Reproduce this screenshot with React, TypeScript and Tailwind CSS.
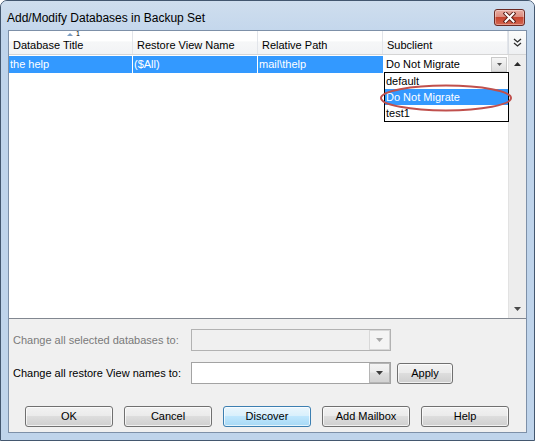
import React from "react";

const font = "font-['Liberation_Sans',Arial,sans-serif]";

function DownArrow({ color = "#3c3c3c", w = 7, h = 4 }: { color?: string; w?: number; h?: number }) {
  return (
    <svg width={w} height={h} viewBox={`0 0 ${w} ${h}`}>
      <polygon points={`0,0 ${w},0 ${w / 2},${h}`} fill={color} />
    </svg>
  );
}

function UpArrow({ color = "#2a2a2a", w = 7, h = 4 }: { color?: string; w?: number; h?: number }) {
  return (
    <svg width={w} height={h} viewBox={`0 0 ${w} ${h}`}>
      <polygon points={`${w / 2},0 ${w},${h} 0,${h}`} fill={color} />
    </svg>
  );
}

function HeaderCell({ label, width, children }: { label: string; width: string; children?: React.ReactNode }) {
  return (
    <div className={`relative ${width} h-full border-r border-[#e2e5ea] pl-[4px] pt-[8px] text-[11px] leading-[13px] text-black`}>
      {children}
      {label}
    </div>
  );
}

function Button({ label, primary = false, width = "w-[88px]" }: { label: string; primary?: boolean; width?: string }) {
  const skin = primary
    ? "border-[#3c7fb1] bg-[linear-gradient(to_bottom,#eaf6fd_0%,#d9f0fc_45%,#bee6fd_50%,#a7d9f5_100%)]"
    : "border-[#707070] bg-[linear-gradient(to_bottom,#f2f2f2_0%,#ebebeb_45%,#dddddd_50%,#cfcfcf_100%)]";
  return (
    <div
      className={`${width} h-[21px] rounded-[3px] border ${skin} shadow-[inset_0_0_0_1px_rgba(255,255,255,0.7)] flex items-center justify-center text-[11px] text-black`}
    >
      {label}
    </div>
  );
}

function Combo({ disabled = false }: { disabled?: boolean }) {
  return (
    <div
      className={`w-[200px] h-[22px] border flex ${
        disabled ? "border-[#b2b2b2] bg-[#f0f0f0]" : "border-[#a3a3a3] bg-white"
      }`}
    >
      <div className="flex-1" />
      <div
        className={`w-[21px] h-full border flex items-center justify-center ${
          disabled
            ? "border-[#d8d8d8] bg-[#f4f4f4]"
            : "border-[#b5b5b5] bg-[linear-gradient(to_bottom,#f4f4f4_0%,#ececec_45%,#dedede_50%,#d2d2d2_100%)]"
        }`}
      >
        <DownArrow color={disabled ? "#a8a8a8" : "#3c3c3c"} />
      </div>
    </div>
  );
}

export default function App() {
  return (
    <div className={`w-[535px] h-[441px] ${font} bg-white`}>
      <div className="relative w-full h-full flex flex-col border border-[#43576f] rounded-t-[7px] bg-[#bfd4eb]">
        {/* title bar */}
        <div className="relative h-[29px] shrink-0 rounded-t-[6px] bg-[linear-gradient(to_bottom,#cfdeee_0%,#c4d7ec_100%)]">
          <span className="absolute left-[6px] top-[10px] text-[12px] leading-[14px] text-black whitespace-nowrap">
            Add/Modify Databases in Backup Set
          </span>
          <div className="absolute right-[9px] top-[8px] w-[31px] h-[17px] rounded-[3px] border border-[#6b2a24] bg-[linear-gradient(to_bottom,#e9ada2_0%,#dc8d80_45%,#c6442f_50%,#d46752_100%)] shadow-[inset_0_0_0_1px_rgba(255,255,255,0.35)] flex items-center justify-center">
            <svg width="13" height="11" viewBox="0 0 13 11">
              <path d="M2.5 1.5 L10.5 9.5 M10.5 1.5 L2.5 9.5" stroke="#5b1f19" strokeWidth="4" strokeLinecap="square" />
              <path d="M2.5 1.5 L10.5 9.5 M10.5 1.5 L2.5 9.5" stroke="#ffffff" strokeWidth="2" strokeLinecap="square" />
            </svg>
          </div>
        </div>

        {/* client area */}
        <div className="mx-[7px] mb-[7px] flex-1 flex flex-col bg-[#f0f0f0] border border-[#7d90a8]">
          {/* list view */}
          <div className="relative h-[288px] shrink-0 bg-white border-b border-[#828790] flex flex-col">
            <div className="h-[24px] shrink-0 flex border-b border-[#d5d5d5] bg-[linear-gradient(to_bottom,#ffffff_0%,#ffffff_45%,#f6f7f8_46%,#f2f3f5_100%)]">
              <HeaderCell label="Database Title" width="w-[124px]">
                <div className="absolute left-[58px] top-[0px] h-[7px] flex items-start gap-[3px]">
                  <div className="mt-[2px]">
                    <UpArrow color="#7b9cc2" w={6} h={3} />
                  </div>
                  <span className="text-[7px] leading-[6px] text-black">1</span>
                </div>
              </HeaderCell>
              <HeaderCell label="Restore View Name" width="w-[125px]" />
              <HeaderCell label="Relative Path" width="w-[125px]" />
              <HeaderCell label="Subclient" width="w-[125px]" />
              <div className="flex-1 h-full border-l border-[#d9dde3] bg-[linear-gradient(to_bottom,#fbfbfb_0%,#eef0f2_100%)] flex items-center justify-center">
                <svg width="9" height="9" viewBox="0 0 9 9">
                  <path d="M1 1 L4.5 4 L8 1 M1 5 L4.5 8 L8 5" stroke="#2e2e2e" strokeWidth="1.3" fill="none" />
                </svg>
              </div>
            </div>

            <div className="flex-1 flex">
              <div className="flex-1 pt-[1px]">
                <div className="h-[17px] flex text-[11px] leading-[13px]">
                  <div className="w-[124px] h-full bg-[#3399ff] border-r border-white text-white pl-[1px] flex items-center">the help</div>
                  <div className="w-[125px] h-full bg-[#3399ff] border-r border-white text-white pl-[1px] flex items-center">($All)</div>
                  <div className="w-[125px] h-full bg-[#3399ff] text-white pl-[1px] flex items-center">mail\thelp</div>
                  <div className="w-[124px] ml-[1px] h-full bg-white flex items-center">
                    <span className="pl-[2px] flex-1 text-black">Do Not Migrate</span>
                    <div className="w-[16px] h-[15px] mr-[1px] border border-[#c9c9c9] bg-[linear-gradient(to_bottom,#f6f6f6_0%,#dedede_100%)] flex items-center justify-center">
                      <DownArrow color="#555555" w={5} h={3} />
                    </div>
                  </div>
                </div>
              </div>
              <div className="w-[18px] h-full bg-[#ededed] border-l border-[#e2e2e2] flex flex-col items-center justify-between pt-[7px] pb-[7px]">
                <UpArrow color="#2a2a2a" />
                <DownArrow color="#4a4a4a" />
              </div>
            </div>

            {/* open drop-down list */}
            <div className="absolute left-[375px] top-[41px] w-[125px] h-[50px] border border-black bg-white text-[11px] leading-[13px] flex flex-col">
              <div className="h-[16px] pl-[1px] flex items-center text-black">default</div>
              <div className="h-[16px] pl-[1px] flex items-center bg-[#3399ff] text-white">Do Not Migrate</div>
              <div className="h-[16px] pl-[1px] flex items-center text-black">test1</div>
            </div>

            {/* highlight ring */}
            <svg className="absolute left-[370px] top-[53px]" width="134" height="28" viewBox="0 0 134 28">
              <ellipse cx="67" cy="14" rx="65" ry="12.5" fill="none" stroke="#c0504d" strokeWidth="2" />
            </svg>
          </div>

          {/* bulk-change rows */}
          <div className="mt-[10px] h-[22px] flex items-center">
            <span className="w-[182px] pl-[4px] text-[11px] text-[#7a7a7a]">Change all selected databases to:</span>
            <Combo disabled />
          </div>
          <div className="mt-[11px] h-[22px] flex items-center">
            <span className="w-[182px] pl-[4px] text-[11px] text-black">Change all restore View names to:</span>
            <Combo />
            <div className="ml-[6px]">
              <Button label="Apply" width="w-[56px]" />
            </div>
          </div>

          {/* dialog buttons */}
          <div className="mt-[22px] pl-[16px] flex gap-[11px]">
            <Button label="OK" />
            <Button label="Cancel" />
            <Button label="Discover" primary />
            <Button label="Add Mailbox" />
            <Button label="Help" />
          </div>
        </div>
      </div>
    </div>
  );
}
